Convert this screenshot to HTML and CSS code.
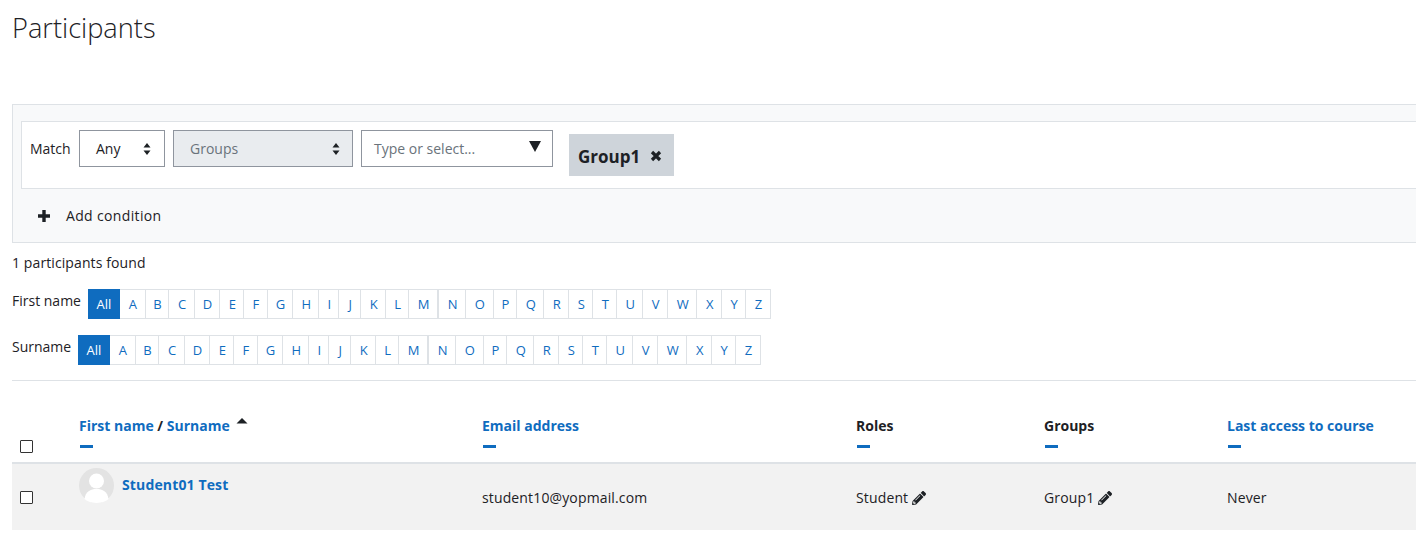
FILE: index.html
```html
<!DOCTYPE html>
<html lang="en">
<head>
<meta charset="utf-8">
<title>Participants</title>
<link rel="stylesheet" href="styles.css">
</head>
<body>
<main class="page">
  <h1 class="title">Participants</h1>
  <section class="filter">
    <div class="condition">
      <span class="match-label">Match</span>
      <div class="select select-any"><span>Any</span>
        <svg class="updown" viewBox="0 0 8 12"><path d="M4 0l3.500 4.500h-7zM4 12L.5 7.500h7z"/></svg></div>
      <div class="select select-groups"><span>Groups</span>
        <svg class="updown" viewBox="0 0 8 12"><path d="M4 0l3.500 4.500h-7zM4 12L.5 7.500h7z"/></svg></div>
      <div class="select select-type"><span>Type or select...</span>
        <svg class="tri" viewBox="0 0 12 11"><path d="M0 0h12L6 11z"/></svg></div>
      <div class="chip">Group1
        <svg class="chip-x" viewBox="0 0 12 12"><path d="M2 2l8 8M10 2l-8 8"/></svg></div>
    </div>
    <div class="add">
      <svg class="plus" viewBox="0 0 12 12"><path d="M6 0v12M0 6h12"/></svg>
      <span>Add condition</span>
    </div>
  </section>
  <p class="found">1 participants found</p>
  <div class="initials initials-first">
    <span class="initials-label">First name</span>
    <ul class="letters">
      <li class="on">All</li><li>A</li><li>B</li><li>C</li><li>D</li><li>E</li><li>F</li><li>G</li><li>H</li><li>I</li><li>J</li><li>K</li><li>L</li><li class="m">M</li><li>N</li><li>O</li><li>P</li><li>Q</li><li>R</li><li>S</li><li>T</li><li>U</li><li>V</li><li>W</li><li>X</li><li>Y</li><li>Z</li>
    </ul>
  </div>
  <div class="initials initials-sur">
    <span class="initials-label">Surname</span>
    <ul class="letters">
      <li class="on">All</li><li>A</li><li>B</li><li>C</li><li>D</li><li>E</li><li>F</li><li>G</li><li>H</li><li>I</li><li>J</li><li>K</li><li>L</li><li class="m">M</li><li>N</li><li>O</li><li>P</li><li>Q</li><li>R</li><li>S</li><li>T</li><li>U</li><li>V</li><li>W</li><li>X</li><li>Y</li><li>Z</li>
    </ul>
  </div>
  <hr class="rule">
  <table class="users">
    <colgroup>
      <col class="c-check"><col class="c-name"><col class="c-email"><col class="c-roles"><col class="c-groups"><col class="c-last">
    </colgroup>
    <thead>
      <tr>
        <th class="check-cell"><span class="box"></span></th>
        <th><a class="link">First name</a> / <a class="link">Surname</a>
          <svg class="caret" viewBox="0 0 12 6"><path d="M6 0l5.500 5.500H.5z"/></svg><span class="dash"></span></th>
        <th><a class="link">Email address</a><span class="dash"></span></th>
        <th>Roles<span class="dash"></span></th>
        <th>Groups<span class="dash"></span></th>
        <th><a class="link">Last access to course</a><span class="dash"></span></th>
      </tr>
    </thead>
    <tbody>
      <tr>
        <td class="check-cell"><span class="box"></span></td>
        <td class="name-cell">
          <div class="person">
            <svg class="avatar" viewBox="0 0 35 35"><circle cx="17.500" cy="17.500" r="17.500" fill="#e3e3e3"/><circle cx="17.500" cy="13" r="7.500" fill="#fff"/><path d="M5.500 31c1-7.500 6-10 12-10s11 2.500 12 10c-3 2.700-7 4-12 4s-9-1.300-12-4z" fill="#fff"/></svg>
            <a class="link student">Student01 Test</a>
          </div>
        </td>
        <td>student10@yopmail.com</td>
        <td>Student <svg class="pencil" viewBox="0 0 512 512"><path d="M497.9 142.100l-46.100 46.100c-4.700 4.700-12.300 4.700-17 0l-111-111c-4.700-4.700-4.700-12.300 0-17l46.100-46.100c18.700-18.700 49.100-18.700 67.900 0l60.100 60.100c18.800 18.700 18.800 49.100 0 67.900zM284.200 99.800L21.600 362.400.4 483.900c-2.900 16.400 11.400 30.600 27.800 27.800l121.500-21.300 262.600-262.600c4.700-4.700 4.700-12.300 0-17l-111-111c-4.800-4.700-12.400-4.700-17.100 0zM124.100 339.900c-5.500-5.500-5.500-14.300 0-19.800l154-154c5.500-5.500 14.300-5.500 19.800 0s5.500 14.300 0 19.800l-154 154c-5.500 5.500-14.300 5.500-19.800 0zM88 424h48v36.300l-64.500 11.300-31.100-31.100L51.700 376H88v48z"/></svg></td>
        <td>Group1 <svg class="pencil" viewBox="0 0 512 512"><path d="M497.9 142.100l-46.100 46.100c-4.700 4.700-12.300 4.700-17 0l-111-111c-4.700-4.700-4.700-12.300 0-17l46.100-46.100c18.700-18.700 49.100-18.700 67.900 0l60.100 60.100c18.800 18.700 18.800 49.100 0 67.900zM284.200 99.800L21.600 362.400.4 483.900c-2.900 16.400 11.400 30.600 27.800 27.800l121.500-21.300 262.600-262.600c4.700-4.700 4.700-12.300 0-17l-111-111c-4.800-4.700-12.400-4.700-17.100 0zM124.100 339.900c-5.500-5.500-5.500-14.300 0-19.800l154-154c5.500-5.500 14.300-5.500 19.800 0s5.500 14.300 0 19.800l-154 154c-5.500 5.500-14.300 5.500-19.800 0zM88 424h48v36.300l-64.500 11.300-31.100-31.100L51.700 376H88v48z"/></svg></td>
        <td>Never</td>
      </tr>
    </tbody>
  </table>
</main>
</body>
</html>
```

FILE: styles.css
```css
* { box-sizing: border-box; }
html, body { margin: 0; padding: 0; overflow: hidden; height: 543px; background: #fff; }
body { font-family: "Open Sans", "Noto Sans", sans-serif; font-size: 14px; line-height: 21px; color: #1d2125; }
.page { width: 1460px; padding-left: 12px; }
.title { margin: 0; padding-top: 10px; height: 104px; font-size: 27.2px; line-height: 36px; font-weight: 300; color: #1d2125; }

.filter { height: 139px; background: #f8f9fa; border: 1px solid #dee2e6; padding: 16px 0 0 8px; }
.condition { height: 68px; background: #fff; border: 1px solid #dee2e6; display: flex; align-items: flex-start; padding: 8px 0 0 8px; }
.match-label { margin: 8px 8px 0 0; width: 41px; white-space: nowrap; }
.select { height: 37px; border: 1px solid #8f959e; background: #fff; display: flex; align-items: center; justify-content: space-between; padding: 0 12px 0 16px; margin-right: 8px; }
.select-any { width: 86px; padding-right: 13px; }
.select-groups { width: 180px; background: #e9ecef; color: #6a737b; }
.select-type { width: 192px; padding: 0 11px 0 12px; color: #6a737b; margin-right: 16px; }
.updown { width: 8px; height: 12px; fill: #1d2125; }
.tri { width: 12px; height: 11px; fill: #1d2125; margin-bottom: 4px; }
.chip { margin-top: 4px; width: 105px; height: 42px; background: #ced4da; display: flex; align-items: center; gap: 10px; padding: 2px 0 0 9px; font-size: 17px; font-weight: 700; color: #1d2125; }
.chip-x { width: 12px; height: 12px; fill: none; stroke: #1d2125; stroke-width: 3.200; }
.add { display: flex; align-items: center; gap: 16px; padding: 16px 0 0 17px; letter-spacing: .35px; }
.plus { width: 12px; height: 12px; fill: none; stroke: #1d2125; stroke-width: 3.400; }

.found { margin: 0; padding-top: 9px; height: 46px; letter-spacing: .1px; }
.initials { display: flex; height: 30px; }
.initials-sur { margin-top: 16px; height: 29px; }
.initials-label { margin: 1px 8px 0 0; white-space: nowrap; flex: none; }
.initials-first .initials-label { width: 68px; }
.initials-sur .initials-label { width: 58px; }
.letters { list-style: none; margin: 0; padding: 0; display: grid; grid-auto-flow: column; font-size: 13px; color: #0f6cbf;
  grid-template-columns: 32px 25.7px 23.6px 25.4px 25.6px 24px 23.4px 25.6px 26px 20px 22px 25px 23px 29.7px 27.3px 27.4px 23.6px 27px 25px 24px 24px 26px 25px 29px 25px 24px 24.4px; }
.letters li { line-height: 28px; padding-left: 1px; border: solid #dee2e6; border-width: 1px 1px 1px 0; text-align: center; }
.letters li.on { background: #0f6cbf; border-color: #0f6cbf; color: #fff; }
.letters li.m { border-right-width: 2px; }
.rule { border: 0; border-top: 1px solid #dee2e6; margin: 16px 0 0; }

.users { border-collapse: collapse; table-layout: fixed; width: 1448px; margin-top: 24px; }
.c-check { width: 55px; } .c-name { width: 403px; } .c-email { width: 374px; } .c-roles { width: 188px; } .c-groups { width: 183px; } .c-last { width: 245px; }
.users th { text-align: left; vertical-align: top; font-weight: 700; padding: 10px 12px 0; height: 58px; border-bottom: 2px solid #dee2e6; }
.users th.check-cell, .users td.check-cell { padding-left: 8px; }
.users th.check-cell { vertical-align: bottom; padding-bottom: 9px; }
.users td { background: #f2f2f2; height: 67px; padding: 12px 12px; vertical-align: middle; letter-spacing: .14px; }
.users td.name-cell { vertical-align: top; padding-top: 4px; }
.users td.check-cell { vertical-align: middle; }
.box { display: block; width: 13px; height: 13px; border: 1px solid #333; background: #fff; border-radius: 1px; }
.link { color: #0f6cbf; font-weight: 700; }
.dash { display: block; width: 13px; height: 3px; background: #0f6cbf; margin: 9px 0 0 1px; }
.caret { width: 12px; height: 6px; fill: #1d2125; margin: 0 0 7px 3px; }
.person { display: flex; gap: 8px; align-items: flex-start; }
.avatar { width: 35px; height: 35px; flex: none; }
.student { margin-top: 6px; }
.pencil { width: 14px; height: 14px; fill: #1d2125; vertical-align: -2px; margin-left: -.3px; }
```
